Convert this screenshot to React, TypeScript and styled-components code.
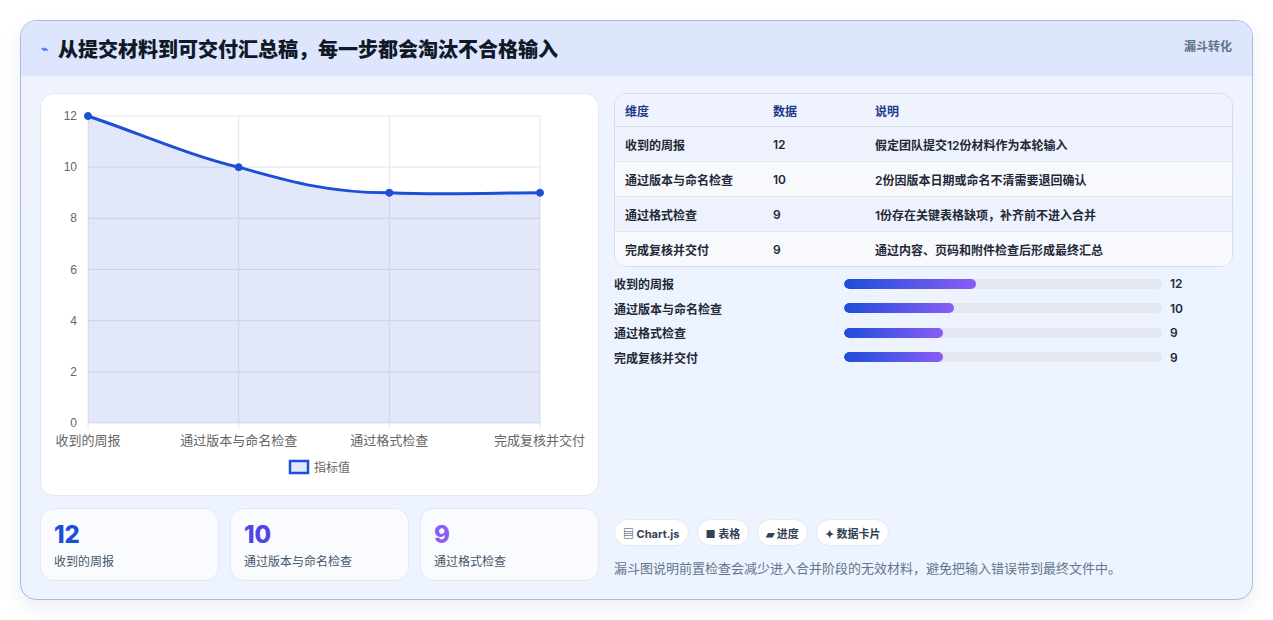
import styled, { createGlobalStyle } from 'styled-components';

const Global = createGlobalStyle`
  body { margin: 0; background: #fff; font-family: 'Inter', 'Noto Sans CJK SC', sans-serif; }
`;

const Page = styled.div`
  padding: 20px 20px 20px 20px;
  height: 620px;
  box-sizing: border-box;
`;

const Panel = styled.div`
  height: 580px;
  box-sizing: border-box;
  border: 1px solid #aab8ea;
  border-radius: 16px;
  background: linear-gradient(180deg, #eef3fe, #edf4ff);
  box-shadow: 0 8px 20px rgba(30, 41, 80, 0.08);
  overflow: hidden;
  display: flex;
  flex-direction: column;
`;

const Header = styled.div`
  height: 55px;
  flex-shrink: 0;
  background: #dde6fd;
  display: flex;
  align-items: center;
  justify-content: space-between;
  padding: 0 20px;
`;

const Title = styled.h1`
  margin: 0;
  font-size: 20px;
  font-weight: 800;
  color: #111827;
  display: flex;
  align-items: center;
  gap: 10px;
`;

const Tag = styled.span`
  font-size: 12px;
  font-weight: 700;
  color: #64748b;
  align-self: flex-start;
  margin-top: 16px;
`;

const Body = styled.div`
  flex: 1;
  display: grid;
  grid-template-columns: 559px 1fr;
  gap: 15px;
  padding: 17px 19px 19px 19px;
`;

const Column = styled.div`
  display: flex;
  flex-direction: column;
  gap: 12px;
`;

const ChartCard = styled.div`
  height: 403px;
  background: #fff;
  border: 1px solid #e3e8f3;
  border-radius: 14px;
  box-sizing: border-box;
`;

const Stats = styled.div`
  display: grid;
  grid-template-columns: repeat(3, 1fr);
  gap: 11px;
`;

const StatCard = styled.div`
  height: 73px;
  box-sizing: border-box;
  background: #f9fbff;
  border: 1px solid #e3e8f3;
  border-radius: 14px;
  padding: 12px 13px;
`;

const StatValue = styled.div<{ $color: string }>`
  font-size: 24px;
  font-weight: 800;
  color: ${(p) => p.$color};
  line-height: 28px;
`;

const StatLabel = styled.div`
  font-size: 12px;
  color: #475569;
  margin-top: 3px;
`;

const Table = styled.table`
  width: 100%;
  border-collapse: separate;
  border-spacing: 0;
  border: 1px solid #d5ddec;
  border-radius: 12px;
  overflow: hidden;
  font-size: 12px;
  font-weight: 600;
  color: #1f2937;
`;

const Th = styled.th`
  text-align: left;
  height: 32px;
  padding: 0 10px;
  color: #1e3a8a;
  background: #eef3fe;
  border-bottom: 1px solid #d5ddec;
`;

const Td = styled.td<{ $odd: boolean }>`
  height: 34px;
  padding: 0 10px;
  background: ${(p) => (p.$odd ? '#eef2fd' : '#f7f9fd')};
  border-bottom: 1px solid #e3e8f3;
  tr:last-child & { border-bottom: none; }
`;

const Bars = styled.div`
  display: flex;
  flex-direction: column;
  gap: 10px;
  margin-top: 8px;
`;

const BarRow = styled.div`
  display: grid;
  grid-template-columns: 222px 318px 1fr;
  align-items: center;
  gap: 8px;
  font-size: 12px;
  font-weight: 600;
  color: #1f2937;
  height: 14.5px;
`;

const Track = styled.div`
  height: 10px;
  border-radius: 5px;
  background: #e2e7f0;
  overflow: hidden;
`;

const Fill = styled.div`
  height: 100%;
  border-radius: 5px;
  background: linear-gradient(90deg, #1d4ed8, #8b5cf6);
`;

const Spacer = styled.div`
  flex: 1;
`;

const Chips = styled.div`
  display: flex;
  gap: 8px;
`;

const Chip = styled.span`
  height: 27px;
  box-sizing: border-box;
  padding: 0 8px;
  display: flex;
  align-items: center;
  gap: 3px;
  border: 1px solid #e3e8f3;
  border-radius: 14px;
  background: #fff;
  font-size: 11px;
  font-weight: 700;
  color: #334155;
`;

const Note = styled.p`
  margin: 12px 0 4px;
  font-size: 13px;
  color: #64748b;
`;

const rows = [
  { name: '收到的周报', value: 12, note: '假定团队提交12份材料作为本轮输入' },
  { name: '通过版本与命名检查', value: 10, note: '2份因版本日期或命名不清需要退回确认' },
  { name: '通过格式检查', value: 9, note: '1份存在关键表格缺项，补齐前不进入合并' },
  { name: '完成复核并交付', value: 9, note: '通过内容、页码和附件检查后形成最终汇总' },
];

function Chart() {
  const x0 = 47, x1 = 499, yTop = 22, yBot = 329;
  const xs = rows.map((_, i) => x0 + ((x1 - x0) / 3) * i);
  const y = (v: number) => yBot - ((yBot - yTop) * v) / 12;
  const pts = rows.map((r, i) => [xs[i], y(r.value)]);
  const line = `M${pts[0][0]},${pts[0][1]} C100,40 150,62 ${pts[1][0]},${pts[1][1]} C250,88 290,99 ${pts[2][0]},${pts[2][1]} C400,101 450,99 ${pts[3][0]},${pts[3][1]}`;
  return (
    <svg width="557" height="401" style={{ display: 'block' }}>
      {[0, 2, 4, 6, 8, 10, 12].map((v) => (
        <g key={v}>
          <line x1={x0} x2={x1} y1={y(v)} y2={y(v)} stroke="#e3e6ee" />
          <text x={x0 - 11} y={y(v) + 4} fontSize="12" fill="#666" textAnchor="end" fontFamily="Liberation Sans, sans-serif">{v}</text>
        </g>
      ))}
      {xs.map((x, i) => (
        <line key={i} x1={x} x2={x} y1={yTop} y2={yBot + 6} stroke="#e3e6ee" />
      ))}
      <path d={`${line} L${x1},${yBot} L${x0},${yBot} Z`} fill="rgba(29,78,216,0.13)" />
      <path d={line} fill="none" stroke="#1d4ed8" strokeWidth="3" />
      {pts.map(([px, py], i) => (
        <circle key={i} cx={px} cy={py} r="3.5" fill="#1d4ed8" stroke="#1d4ed8" />
      ))}
      {rows.map((r, i) => (
        <text key={r.name} x={i === 0 ? 47 : i === 3 ? 544 : xs[i]} y={351} fontSize="13" fill="#666"
          textAnchor={i === 0 ? 'middle' : i === 3 ? 'end' : 'middle'} fontFamily="Noto Sans CJK SC, sans-serif">{r.name}</text>
      ))}
      <rect x="249" y="367" width="18" height="12" fill="rgba(29,78,216,0.13)" stroke="#1d4ed8" strokeWidth="2.5" />
      <text x="273" y="378" fontSize="12" fill="#666" fontFamily="Noto Sans CJK SC, sans-serif">指标值</text>
    </svg>
  );
}

export default function App() {
  return (
    <Page>
      <Global />
      <Panel>
        <Header>
          <Title>
            <span style={{ fontSize: 12, color: '#4f6ef7' }}>⌁</span>
            从提交材料到可交付汇总稿，每一步都会淘汰不合格输入
          </Title>
          <Tag>漏斗转化</Tag>
        </Header>
        <Body>
          <Column>
            <ChartCard>
              <Chart />
            </ChartCard>
            <Stats>
              <StatCard>
                <StatValue $color="#1d4ed8">12</StatValue>
                <StatLabel>收到的周报</StatLabel>
              </StatCard>
              <StatCard>
                <StatValue $color="#4f46e5">10</StatValue>
                <StatLabel>通过版本与命名检查</StatLabel>
              </StatCard>
              <StatCard>
                <StatValue $color="#8b5cf6">9</StatValue>
                <StatLabel>通过格式检查</StatLabel>
              </StatCard>
            </Stats>
          </Column>
          <Column style={{ gap: 0 }}>
            <Table>
              <thead>
                <tr>
                  <Th style={{ width: 128 }}>维度</Th>
                  <Th style={{ width: 82 }}>数据</Th>
                  <Th>说明</Th>
                </tr>
              </thead>
              <tbody>
                {rows.map((r, i) => (
                  <tr key={r.name}>
                    <Td $odd={i % 2 === 0}>{r.name}</Td>
                    <Td $odd={i % 2 === 0}>{r.value}</Td>
                    <Td $odd={i % 2 === 0}>{r.note}</Td>
                  </tr>
                ))}
              </tbody>
            </Table>
            <Bars>
              {rows.map((r) => (
                <BarRow key={r.name}>
                  <span>{r.name}</span>
                  <Track>
                    <Fill style={{ width: `${(r.value / 29) * 100}%` }} />
                  </Track>
                  <span>{r.value}</span>
                </BarRow>
              ))}
            </Bars>
            <Spacer />
            <Chips>
              <Chip>▤ Chart.js</Chip>
              <Chip>■ 表格</Chip>
              <Chip>▰ 进度</Chip>
              <Chip>✦ 数据卡片</Chip>
            </Chips>
            <Note>漏斗图说明前置检查会减少进入合并阶段的无效材料，避免把输入错误带到最终文件中。</Note>
          </Column>
        </Body>
      </Panel>
    </Page>
  );
}
